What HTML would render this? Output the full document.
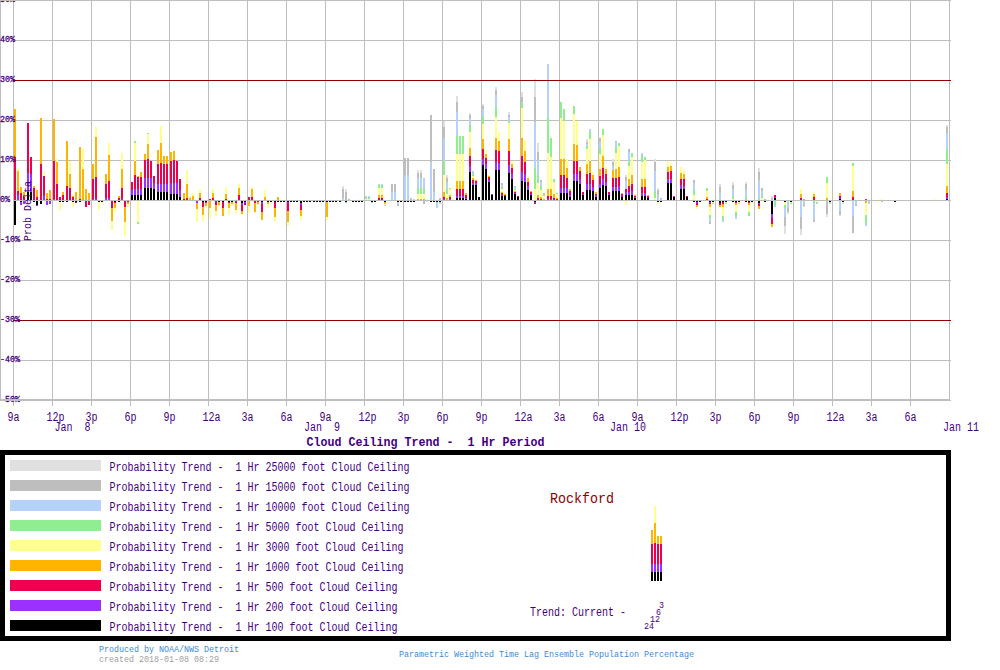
<!DOCTYPE html>
<html><head><meta charset="utf-8"><title>Cloud Ceiling Trend - 1 Hr Period - Rockford</title>
<style>html,body{margin:0;padding:0;background:#fff}svg{display:block}text{font-family:"Liberation Mono","DejaVu Sans Mono",monospace;white-space:pre}</style>
</head><body>
<svg width="1000" height="670" viewBox="0 0 1000 670">
<rect width="1000" height="670" fill="#fff"/>
<g shape-rendering="crispEdges">
<rect x="0" y="0" width="1" height="401" fill="#bebebe"/>
<rect x="13" y="0" width="1" height="406" fill="#bebebe"/>
<rect x="52" y="0" width="1" height="406" fill="#bebebe"/>
<rect x="91" y="0" width="1" height="406" fill="#bebebe"/>
<rect x="130" y="0" width="1" height="406" fill="#bebebe"/>
<rect x="169" y="0" width="1" height="406" fill="#bebebe"/>
<rect x="208" y="0" width="1" height="406" fill="#bebebe"/>
<rect x="247" y="0" width="1" height="406" fill="#bebebe"/>
<rect x="286" y="0" width="1" height="406" fill="#bebebe"/>
<rect x="325" y="0" width="1" height="406" fill="#bebebe"/>
<rect x="364" y="0" width="1" height="406" fill="#bebebe"/>
<rect x="403" y="0" width="1" height="406" fill="#bebebe"/>
<rect x="442" y="0" width="1" height="406" fill="#bebebe"/>
<rect x="481" y="0" width="1" height="406" fill="#bebebe"/>
<rect x="520" y="0" width="1" height="406" fill="#bebebe"/>
<rect x="559" y="0" width="1" height="406" fill="#bebebe"/>
<rect x="598" y="0" width="1" height="406" fill="#bebebe"/>
<rect x="637" y="0" width="1" height="406" fill="#bebebe"/>
<rect x="676" y="0" width="1" height="406" fill="#bebebe"/>
<rect x="715" y="0" width="1" height="406" fill="#bebebe"/>
<rect x="754" y="0" width="1" height="406" fill="#bebebe"/>
<rect x="793" y="0" width="1" height="406" fill="#bebebe"/>
<rect x="832" y="0" width="1" height="406" fill="#bebebe"/>
<rect x="871" y="0" width="1" height="406" fill="#bebebe"/>
<rect x="910" y="0" width="1" height="406" fill="#bebebe"/>
<rect x="949" y="0" width="1" height="401" fill="#bebebe"/>
<rect x="0" y="0" width="951" height="1" fill="#bebebe"/>
<rect x="13" y="40" width="938" height="1" fill="#bebebe"/>
<rect x="13" y="80" width="938" height="1" fill="#8b0000"/>
<rect x="13" y="120" width="938" height="1" fill="#bebebe"/>
<rect x="13" y="160" width="938" height="1" fill="#bebebe"/>
<rect x="13" y="200" width="938" height="1" fill="#bebebe"/>
<rect x="13" y="240" width="938" height="1" fill="#bebebe"/>
<rect x="13" y="280" width="938" height="1" fill="#bebebe"/>
<rect x="13" y="320" width="938" height="1" fill="#8b0000"/>
<rect x="13" y="360" width="938" height="1" fill="#bebebe"/>
<rect x="0" y="400" width="951" height="1" fill="#bebebe"/>
</g>
<g shape-rendering="crispEdges">
<rect x="14" y="157" width="2" height="43" fill="#ee0050"/>
<rect x="14" y="109" width="2" height="48" fill="#ffb400"/>
<rect x="14" y="201" width="2" height="24" fill="#000000"/>
<rect x="17" y="195" width="2" height="5" fill="#9b30ff"/>
<rect x="17" y="191" width="2" height="4" fill="#ee0050"/>
<rect x="17" y="171" width="2" height="20" fill="#ffb400"/>
<rect x="17" y="168" width="2" height="3" fill="#ffff90"/>
<rect x="20" y="193" width="2" height="7" fill="#ee0050"/>
<rect x="20" y="187" width="2" height="6" fill="#ffb400"/>
<rect x="20" y="201" width="2" height="1" fill="#000000"/>
<rect x="20" y="202" width="2" height="3" fill="#9b30ff"/>
<rect x="23" y="197" width="2" height="3" fill="#ee0050"/>
<rect x="23" y="192" width="2" height="5" fill="#ffb400"/>
<rect x="23" y="201" width="2" height="3" fill="#9b30ff"/>
<rect x="27" y="192" width="2" height="8" fill="#000000"/>
<rect x="27" y="173" width="2" height="19" fill="#9b30ff"/>
<rect x="27" y="123" width="2" height="50" fill="#ee0050"/>
<rect x="30" y="192" width="2" height="8" fill="#000000"/>
<rect x="30" y="174" width="2" height="18" fill="#9b30ff"/>
<rect x="30" y="157" width="2" height="17" fill="#ee0050"/>
<rect x="33" y="188" width="2" height="12" fill="#ee0050"/>
<rect x="33" y="186" width="2" height="2" fill="#ffb400"/>
<rect x="33" y="201" width="2" height="1" fill="#000000"/>
<rect x="36" y="197" width="2" height="3" fill="#ee0050"/>
<rect x="36" y="190" width="2" height="7" fill="#ffb400"/>
<rect x="36" y="201" width="2" height="4" fill="#000000"/>
<rect x="36" y="205" width="2" height="1" fill="#9b30ff"/>
<rect x="40" y="164" width="2" height="36" fill="#ee0050"/>
<rect x="40" y="118" width="2" height="46" fill="#ffb400"/>
<rect x="40" y="201" width="2" height="3" fill="#000000"/>
<rect x="43" y="195" width="2" height="5" fill="#9b30ff"/>
<rect x="43" y="176" width="2" height="19" fill="#ee0050"/>
<rect x="43" y="171" width="2" height="5" fill="#ffff90"/>
<rect x="46" y="199" width="2" height="1" fill="#ee0050"/>
<rect x="46" y="193" width="2" height="6" fill="#ffb400"/>
<rect x="46" y="201" width="2" height="4" fill="#9b30ff"/>
<rect x="49" y="199" width="2" height="1" fill="#ee0050"/>
<rect x="49" y="190" width="2" height="9" fill="#ffb400"/>
<rect x="49" y="201" width="2" height="3" fill="#9b30ff"/>
<rect x="53" y="199" width="2" height="1" fill="#9b30ff"/>
<rect x="53" y="161" width="2" height="38" fill="#ee0050"/>
<rect x="53" y="119" width="2" height="42" fill="#ffb400"/>
<rect x="56" y="184" width="2" height="16" fill="#ee0050"/>
<rect x="56" y="162" width="2" height="22" fill="#ffb400"/>
<rect x="56" y="159" width="2" height="3" fill="#ffff90"/>
<rect x="59" y="197" width="2" height="3" fill="#ee0050"/>
<rect x="59" y="201" width="2" height="1" fill="#000000"/>
<rect x="59" y="202" width="2" height="8" fill="#ffff90"/>
<rect x="62" y="195" width="2" height="5" fill="#ee0050"/>
<rect x="62" y="192" width="2" height="3" fill="#ffb400"/>
<rect x="62" y="201" width="2" height="1" fill="#000000"/>
<rect x="66" y="186" width="2" height="14" fill="#ee0050"/>
<rect x="66" y="141" width="2" height="45" fill="#ffb400"/>
<rect x="66" y="201" width="2" height="1" fill="#000000"/>
<rect x="69" y="188" width="2" height="12" fill="#ee0050"/>
<rect x="69" y="174" width="2" height="14" fill="#ffb400"/>
<rect x="69" y="161" width="2" height="13" fill="#ffff90"/>
<rect x="72" y="197" width="2" height="3" fill="#ee0050"/>
<rect x="72" y="196" width="2" height="1" fill="#ffb400"/>
<rect x="72" y="201" width="2" height="1" fill="#000000"/>
<rect x="72" y="202" width="2" height="5" fill="#ffff90"/>
<rect x="75" y="192" width="2" height="8" fill="#ffb400"/>
<rect x="75" y="201" width="2" height="1" fill="#000000"/>
<rect x="75" y="202" width="2" height="1" fill="#ee0050"/>
<rect x="79" y="199" width="2" height="1" fill="#ee0050"/>
<rect x="79" y="147" width="2" height="52" fill="#ffb400"/>
<rect x="79" y="201" width="2" height="1" fill="#000000"/>
<rect x="82" y="169" width="2" height="31" fill="#ffb400"/>
<rect x="82" y="149" width="2" height="20" fill="#ffff90"/>
<rect x="85" y="189" width="2" height="11" fill="#ffb400"/>
<rect x="85" y="201" width="2" height="6" fill="#ee0050"/>
<rect x="88" y="193" width="2" height="7" fill="#ffb400"/>
<rect x="88" y="201" width="2" height="4" fill="#ee0050"/>
<rect x="92" y="199" width="2" height="1" fill="#9b30ff"/>
<rect x="92" y="179" width="2" height="20" fill="#ee0050"/>
<rect x="92" y="164" width="2" height="15" fill="#ffb400"/>
<rect x="95" y="199" width="2" height="1" fill="#9b30ff"/>
<rect x="95" y="177" width="2" height="22" fill="#ee0050"/>
<rect x="95" y="137" width="2" height="40" fill="#ffb400"/>
<rect x="95" y="127" width="2" height="10" fill="#ffff90"/>
<rect x="98" y="201" width="2" height="1" fill="#000000"/>
<rect x="98" y="202" width="2" height="8" fill="#ffff90"/>
<rect x="101" y="201" width="2" height="1" fill="#000000"/>
<rect x="101" y="202" width="2" height="1" fill="#ffff90"/>
<rect x="105" y="198" width="2" height="2" fill="#9b30ff"/>
<rect x="105" y="184" width="2" height="14" fill="#ee0050"/>
<rect x="105" y="174" width="2" height="10" fill="#ffb400"/>
<rect x="108" y="198" width="2" height="2" fill="#9b30ff"/>
<rect x="108" y="181" width="2" height="17" fill="#ee0050"/>
<rect x="108" y="155" width="2" height="26" fill="#ffb400"/>
<rect x="108" y="143" width="2" height="12" fill="#ffff90"/>
<rect x="111" y="201" width="2" height="7" fill="#ee0050"/>
<rect x="111" y="208" width="2" height="13" fill="#ffb400"/>
<rect x="111" y="221" width="2" height="9" fill="#ffff90"/>
<rect x="114" y="201" width="2" height="1" fill="#000000"/>
<rect x="114" y="202" width="2" height="1" fill="#ee0050"/>
<rect x="114" y="203" width="2" height="5" fill="#ffb400"/>
<rect x="114" y="208" width="2" height="4" fill="#ffff90"/>
<rect x="118" y="198" width="2" height="2" fill="#ee0050"/>
<rect x="118" y="196" width="2" height="2" fill="#ffb400"/>
<rect x="118" y="201" width="2" height="1" fill="#000000"/>
<rect x="121" y="199" width="2" height="1" fill="#9b30ff"/>
<rect x="121" y="188" width="2" height="11" fill="#ee0050"/>
<rect x="121" y="169" width="2" height="19" fill="#ffb400"/>
<rect x="121" y="153" width="2" height="16" fill="#ffff90"/>
<rect x="124" y="201" width="2" height="6" fill="#ee0050"/>
<rect x="124" y="207" width="2" height="15" fill="#ffb400"/>
<rect x="124" y="222" width="2" height="14" fill="#ffff90"/>
<rect x="127" y="201" width="2" height="1" fill="#ee0050"/>
<rect x="127" y="202" width="2" height="2" fill="#ffb400"/>
<rect x="127" y="204" width="2" height="3" fill="#ffff90"/>
<rect x="131" y="195" width="2" height="5" fill="#000000"/>
<rect x="131" y="190" width="2" height="5" fill="#9b30ff"/>
<rect x="131" y="182" width="2" height="8" fill="#ee0050"/>
<rect x="134" y="195" width="2" height="5" fill="#000000"/>
<rect x="134" y="189" width="2" height="6" fill="#9b30ff"/>
<rect x="134" y="175" width="2" height="14" fill="#ee0050"/>
<rect x="134" y="161" width="2" height="14" fill="#ffb400"/>
<rect x="134" y="143" width="2" height="18" fill="#ffff90"/>
<rect x="134" y="141" width="2" height="2" fill="#90ee90"/>
<rect x="137" y="195" width="2" height="5" fill="#000000"/>
<rect x="137" y="189" width="2" height="6" fill="#9b30ff"/>
<rect x="137" y="177" width="2" height="12" fill="#ee0050"/>
<rect x="137" y="176" width="2" height="1" fill="#ffb400"/>
<rect x="137" y="201" width="2" height="21" fill="#ffff90"/>
<rect x="137" y="222" width="2" height="2" fill="#90ee90"/>
<rect x="140" y="195" width="2" height="5" fill="#000000"/>
<rect x="140" y="189" width="2" height="6" fill="#9b30ff"/>
<rect x="140" y="177" width="2" height="12" fill="#ee0050"/>
<rect x="140" y="172" width="2" height="5" fill="#ffb400"/>
<rect x="144" y="188" width="2" height="12" fill="#000000"/>
<rect x="144" y="178" width="2" height="10" fill="#9b30ff"/>
<rect x="144" y="160" width="2" height="18" fill="#ee0050"/>
<rect x="144" y="154" width="2" height="6" fill="#ffb400"/>
<rect x="147" y="188" width="2" height="12" fill="#000000"/>
<rect x="147" y="178" width="2" height="10" fill="#9b30ff"/>
<rect x="147" y="159" width="2" height="19" fill="#ee0050"/>
<rect x="147" y="144" width="2" height="15" fill="#ffb400"/>
<rect x="147" y="134" width="2" height="10" fill="#ffff90"/>
<rect x="147" y="133" width="2" height="1" fill="#90ee90"/>
<rect x="150" y="188" width="2" height="12" fill="#000000"/>
<rect x="150" y="178" width="2" height="10" fill="#9b30ff"/>
<rect x="150" y="161" width="2" height="17" fill="#ee0050"/>
<rect x="153" y="189" width="2" height="11" fill="#000000"/>
<rect x="153" y="183" width="2" height="6" fill="#9b30ff"/>
<rect x="153" y="176" width="2" height="7" fill="#ee0050"/>
<rect x="157" y="192" width="2" height="8" fill="#000000"/>
<rect x="157" y="184" width="2" height="8" fill="#9b30ff"/>
<rect x="157" y="164" width="2" height="20" fill="#ee0050"/>
<rect x="157" y="150" width="2" height="14" fill="#ffb400"/>
<rect x="160" y="192" width="2" height="8" fill="#000000"/>
<rect x="160" y="184" width="2" height="8" fill="#9b30ff"/>
<rect x="160" y="163" width="2" height="21" fill="#ee0050"/>
<rect x="160" y="143" width="2" height="20" fill="#ffb400"/>
<rect x="160" y="126" width="2" height="17" fill="#ffff90"/>
<rect x="163" y="192" width="2" height="8" fill="#000000"/>
<rect x="163" y="184" width="2" height="8" fill="#9b30ff"/>
<rect x="163" y="164" width="2" height="20" fill="#ee0050"/>
<rect x="163" y="156" width="2" height="8" fill="#ffb400"/>
<rect x="166" y="192" width="2" height="8" fill="#000000"/>
<rect x="166" y="184" width="2" height="8" fill="#9b30ff"/>
<rect x="166" y="164" width="2" height="20" fill="#ee0050"/>
<rect x="166" y="156" width="2" height="8" fill="#ffb400"/>
<rect x="170" y="194" width="2" height="6" fill="#000000"/>
<rect x="170" y="183" width="2" height="11" fill="#9b30ff"/>
<rect x="170" y="161" width="2" height="22" fill="#ee0050"/>
<rect x="170" y="152" width="2" height="9" fill="#ffb400"/>
<rect x="173" y="194" width="2" height="6" fill="#000000"/>
<rect x="173" y="183" width="2" height="11" fill="#9b30ff"/>
<rect x="173" y="160" width="2" height="23" fill="#ee0050"/>
<rect x="173" y="151" width="2" height="9" fill="#ffb400"/>
<rect x="176" y="194" width="2" height="6" fill="#000000"/>
<rect x="176" y="183" width="2" height="11" fill="#9b30ff"/>
<rect x="176" y="161" width="2" height="22" fill="#ee0050"/>
<rect x="179" y="197" width="2" height="3" fill="#000000"/>
<rect x="179" y="190" width="2" height="7" fill="#9b30ff"/>
<rect x="179" y="179" width="2" height="11" fill="#ee0050"/>
<rect x="183" y="199" width="2" height="1" fill="#ee0050"/>
<rect x="183" y="193" width="2" height="6" fill="#ffb400"/>
<rect x="183" y="201" width="2" height="1" fill="#ffff90"/>
<rect x="186" y="198" width="2" height="2" fill="#ee0050"/>
<rect x="186" y="184" width="2" height="14" fill="#ffb400"/>
<rect x="186" y="170" width="2" height="14" fill="#ffff90"/>
<rect x="189" y="198" width="2" height="2" fill="#ffb400"/>
<rect x="189" y="196" width="2" height="2" fill="#ffff90"/>
<rect x="192" y="196" width="2" height="4" fill="#ffb400"/>
<rect x="192" y="193" width="2" height="3" fill="#ffff90"/>
<rect x="196" y="201" width="2" height="2" fill="#9b30ff"/>
<rect x="196" y="203" width="2" height="6" fill="#ffb400"/>
<rect x="196" y="209" width="2" height="13" fill="#ffff90"/>
<rect x="199" y="198" width="2" height="2" fill="#ee0050"/>
<rect x="199" y="193" width="2" height="5" fill="#ffb400"/>
<rect x="199" y="189" width="2" height="4" fill="#ffff90"/>
<rect x="202" y="201" width="2" height="1" fill="#000000"/>
<rect x="202" y="202" width="2" height="5" fill="#ee0050"/>
<rect x="202" y="207" width="2" height="8" fill="#ffb400"/>
<rect x="202" y="215" width="2" height="6" fill="#ffff90"/>
<rect x="205" y="201" width="2" height="1" fill="#000000"/>
<rect x="205" y="202" width="2" height="1" fill="#ee0050"/>
<rect x="205" y="203" width="2" height="3" fill="#ffb400"/>
<rect x="205" y="206" width="2" height="2" fill="#ffff90"/>
<rect x="209" y="199" width="2" height="1" fill="#ee0050"/>
<rect x="209" y="201" width="2" height="7" fill="#ffb400"/>
<rect x="209" y="208" width="2" height="10" fill="#ffff90"/>
<rect x="212" y="198" width="2" height="2" fill="#ee0050"/>
<rect x="212" y="193" width="2" height="5" fill="#ffb400"/>
<rect x="212" y="189" width="2" height="4" fill="#ffff90"/>
<rect x="215" y="201" width="2" height="4" fill="#ee0050"/>
<rect x="215" y="205" width="2" height="6" fill="#ffb400"/>
<rect x="215" y="211" width="2" height="5" fill="#ffff90"/>
<rect x="218" y="201" width="2" height="1" fill="#000000"/>
<rect x="218" y="202" width="2" height="3" fill="#ffb400"/>
<rect x="218" y="205" width="2" height="1" fill="#ffff90"/>
<rect x="222" y="201" width="2" height="1" fill="#000000"/>
<rect x="222" y="202" width="2" height="6" fill="#ee0050"/>
<rect x="222" y="208" width="2" height="8" fill="#ffb400"/>
<rect x="225" y="199" width="2" height="1" fill="#ee0050"/>
<rect x="225" y="194" width="2" height="5" fill="#ffb400"/>
<rect x="225" y="187" width="2" height="7" fill="#ffff90"/>
<rect x="228" y="201" width="2" height="1" fill="#000000"/>
<rect x="228" y="202" width="2" height="1" fill="#ee0050"/>
<rect x="228" y="203" width="2" height="5" fill="#ffb400"/>
<rect x="228" y="208" width="2" height="7" fill="#ffff90"/>
<rect x="231" y="201" width="2" height="1" fill="#000000"/>
<rect x="231" y="202" width="2" height="2" fill="#ffb400"/>
<rect x="231" y="204" width="2" height="2" fill="#ffff90"/>
<rect x="235" y="201" width="2" height="2" fill="#ee0050"/>
<rect x="235" y="203" width="2" height="7" fill="#ffb400"/>
<rect x="235" y="210" width="2" height="3" fill="#ffff90"/>
<rect x="238" y="195" width="2" height="5" fill="#ee0050"/>
<rect x="238" y="188" width="2" height="7" fill="#ffb400"/>
<rect x="238" y="184" width="2" height="4" fill="#ffff90"/>
<rect x="241" y="201" width="2" height="2" fill="#000000"/>
<rect x="241" y="203" width="2" height="2" fill="#9b30ff"/>
<rect x="241" y="205" width="2" height="6" fill="#ee0050"/>
<rect x="241" y="211" width="2" height="3" fill="#ffb400"/>
<rect x="241" y="214" width="2" height="1" fill="#ffff90"/>
<rect x="244" y="201" width="2" height="1" fill="#000000"/>
<rect x="244" y="202" width="2" height="1" fill="#9b30ff"/>
<rect x="244" y="203" width="2" height="2" fill="#ee0050"/>
<rect x="244" y="205" width="2" height="1" fill="#ffff90"/>
<rect x="248" y="197" width="2" height="3" fill="#ee0050"/>
<rect x="248" y="201" width="2" height="5" fill="#ffb400"/>
<rect x="248" y="206" width="2" height="7" fill="#ffff90"/>
<rect x="251" y="197" width="2" height="3" fill="#ee0050"/>
<rect x="251" y="189" width="2" height="8" fill="#ffb400"/>
<rect x="251" y="186" width="2" height="3" fill="#ffff90"/>
<rect x="254" y="201" width="2" height="2" fill="#ee0050"/>
<rect x="254" y="203" width="2" height="9" fill="#ffb400"/>
<rect x="254" y="212" width="2" height="1" fill="#ffff90"/>
<rect x="257" y="201" width="2" height="1" fill="#ee0050"/>
<rect x="257" y="202" width="2" height="2" fill="#ffb400"/>
<rect x="257" y="204" width="2" height="1" fill="#ffff90"/>
<rect x="261" y="201" width="2" height="1" fill="#000000"/>
<rect x="261" y="202" width="2" height="2" fill="#9b30ff"/>
<rect x="261" y="204" width="2" height="8" fill="#ee0050"/>
<rect x="261" y="212" width="2" height="8" fill="#ffb400"/>
<rect x="264" y="197" width="2" height="3" fill="#ffb400"/>
<rect x="264" y="190" width="2" height="7" fill="#ffff90"/>
<rect x="267" y="201" width="2" height="1" fill="#000000"/>
<rect x="267" y="202" width="2" height="2" fill="#ffb400"/>
<rect x="267" y="204" width="2" height="4" fill="#ffff90"/>
<rect x="270" y="201" width="2" height="1" fill="#000000"/>
<rect x="274" y="201" width="2" height="1" fill="#000000"/>
<rect x="274" y="202" width="2" height="6" fill="#ee0050"/>
<rect x="274" y="208" width="2" height="9" fill="#ffb400"/>
<rect x="274" y="217" width="2" height="5" fill="#ffff90"/>
<rect x="277" y="197" width="2" height="3" fill="#ffb400"/>
<rect x="277" y="201" width="2" height="1" fill="#000000"/>
<rect x="280" y="201" width="2" height="1" fill="#000000"/>
<rect x="280" y="202" width="2" height="1" fill="#ffff90"/>
<rect x="283" y="201" width="2" height="1" fill="#000000"/>
<rect x="287" y="201" width="2" height="1" fill="#000000"/>
<rect x="287" y="202" width="2" height="1" fill="#9b30ff"/>
<rect x="287" y="203" width="2" height="8" fill="#ee0050"/>
<rect x="287" y="211" width="2" height="11" fill="#ffb400"/>
<rect x="287" y="222" width="2" height="4" fill="#ffff90"/>
<rect x="290" y="201" width="2" height="1" fill="#000000"/>
<rect x="293" y="201" width="2" height="1" fill="#000000"/>
<rect x="296" y="201" width="2" height="1" fill="#000000"/>
<rect x="300" y="201" width="2" height="2" fill="#000000"/>
<rect x="300" y="203" width="2" height="2" fill="#9b30ff"/>
<rect x="300" y="205" width="2" height="5" fill="#ee0050"/>
<rect x="300" y="210" width="2" height="6" fill="#ffb400"/>
<rect x="300" y="216" width="2" height="4" fill="#ffff90"/>
<rect x="303" y="201" width="2" height="1" fill="#000000"/>
<rect x="306" y="201" width="2" height="1" fill="#000000"/>
<rect x="309" y="201" width="2" height="1" fill="#000000"/>
<rect x="313" y="201" width="2" height="1" fill="#000000"/>
<rect x="316" y="201" width="2" height="1" fill="#000000"/>
<rect x="319" y="201" width="2" height="1" fill="#000000"/>
<rect x="322" y="201" width="2" height="1" fill="#000000"/>
<rect x="326" y="201" width="2" height="1" fill="#000000"/>
<rect x="326" y="202" width="2" height="15" fill="#ffb400"/>
<rect x="326" y="217" width="2" height="3" fill="#ffff90"/>
<rect x="329" y="201" width="2" height="1" fill="#000000"/>
<rect x="332" y="201" width="2" height="1" fill="#000000"/>
<rect x="335" y="201" width="2" height="1" fill="#000000"/>
<rect x="339" y="201" width="2" height="1" fill="#000000"/>
<rect x="342" y="198" width="2" height="2" fill="#b4d2fa"/>
<rect x="342" y="189" width="2" height="9" fill="#bebebe"/>
<rect x="342" y="186" width="2" height="3" fill="#e0e0e0"/>
<rect x="345" y="192" width="2" height="8" fill="#bebebe"/>
<rect x="345" y="189" width="2" height="3" fill="#e0e0e0"/>
<rect x="345" y="201" width="2" height="1" fill="#000000"/>
<rect x="345" y="202" width="2" height="1" fill="#90ee90"/>
<rect x="348" y="199" width="2" height="1" fill="#bebebe"/>
<rect x="352" y="201" width="2" height="1" fill="#000000"/>
<rect x="355" y="201" width="2" height="1" fill="#000000"/>
<rect x="358" y="201" width="2" height="1" fill="#000000"/>
<rect x="361" y="201" width="2" height="1" fill="#000000"/>
<rect x="365" y="199" width="2" height="1" fill="#ffff90"/>
<rect x="365" y="197" width="2" height="2" fill="#90ee90"/>
<rect x="365" y="196" width="2" height="1" fill="#b4d2fa"/>
<rect x="368" y="199" width="2" height="1" fill="#ffff90"/>
<rect x="368" y="197" width="2" height="2" fill="#90ee90"/>
<rect x="368" y="196" width="2" height="1" fill="#b4d2fa"/>
<rect x="371" y="201" width="2" height="1" fill="#000000"/>
<rect x="371" y="202" width="2" height="1" fill="#90ee90"/>
<rect x="374" y="201" width="2" height="1" fill="#000000"/>
<rect x="378" y="198" width="2" height="2" fill="#ee0050"/>
<rect x="378" y="195" width="2" height="3" fill="#ffb400"/>
<rect x="378" y="188" width="2" height="7" fill="#ffff90"/>
<rect x="378" y="185" width="2" height="3" fill="#90ee90"/>
<rect x="378" y="184" width="2" height="1" fill="#b4d2fa"/>
<rect x="381" y="198" width="2" height="2" fill="#ee0050"/>
<rect x="381" y="195" width="2" height="3" fill="#ffb400"/>
<rect x="381" y="188" width="2" height="7" fill="#ffff90"/>
<rect x="381" y="185" width="2" height="3" fill="#90ee90"/>
<rect x="381" y="184" width="2" height="1" fill="#b4d2fa"/>
<rect x="384" y="201" width="2" height="1" fill="#000000"/>
<rect x="384" y="202" width="2" height="2" fill="#ffb400"/>
<rect x="384" y="204" width="2" height="1" fill="#ffff90"/>
<rect x="384" y="205" width="2" height="1" fill="#b4d2fa"/>
<rect x="391" y="192" width="2" height="8" fill="#b4d2fa"/>
<rect x="391" y="184" width="2" height="8" fill="#bebebe"/>
<rect x="394" y="192" width="2" height="8" fill="#b4d2fa"/>
<rect x="394" y="184" width="2" height="8" fill="#bebebe"/>
<rect x="397" y="201" width="2" height="1" fill="#000000"/>
<rect x="397" y="202" width="2" height="2" fill="#b4d2fa"/>
<rect x="397" y="204" width="2" height="2" fill="#bebebe"/>
<rect x="400" y="201" width="2" height="1" fill="#000000"/>
<rect x="404" y="175" width="2" height="25" fill="#b4d2fa"/>
<rect x="404" y="158" width="2" height="17" fill="#bebebe"/>
<rect x="404" y="201" width="2" height="1" fill="#000000"/>
<rect x="407" y="175" width="2" height="25" fill="#b4d2fa"/>
<rect x="407" y="158" width="2" height="17" fill="#bebebe"/>
<rect x="407" y="201" width="2" height="1" fill="#000000"/>
<rect x="410" y="198" width="2" height="2" fill="#bebebe"/>
<rect x="410" y="201" width="2" height="1" fill="#000000"/>
<rect x="413" y="199" width="2" height="1" fill="#b4d2fa"/>
<rect x="413" y="201" width="2" height="1" fill="#000000"/>
<rect x="417" y="199" width="2" height="1" fill="#ffb400"/>
<rect x="417" y="194" width="2" height="5" fill="#ffff90"/>
<rect x="417" y="188" width="2" height="6" fill="#90ee90"/>
<rect x="417" y="178" width="2" height="10" fill="#b4d2fa"/>
<rect x="417" y="173" width="2" height="5" fill="#bebebe"/>
<rect x="417" y="170" width="2" height="3" fill="#e0e0e0"/>
<rect x="420" y="199" width="2" height="1" fill="#ffb400"/>
<rect x="420" y="194" width="2" height="5" fill="#ffff90"/>
<rect x="420" y="188" width="2" height="6" fill="#90ee90"/>
<rect x="420" y="178" width="2" height="10" fill="#b4d2fa"/>
<rect x="420" y="173" width="2" height="5" fill="#bebebe"/>
<rect x="420" y="170" width="2" height="3" fill="#e0e0e0"/>
<rect x="423" y="199" width="2" height="1" fill="#ffb400"/>
<rect x="423" y="194" width="2" height="5" fill="#ffff90"/>
<rect x="423" y="188" width="2" height="6" fill="#90ee90"/>
<rect x="423" y="178" width="2" height="10" fill="#b4d2fa"/>
<rect x="423" y="201" width="2" height="3" fill="#bebebe"/>
<rect x="426" y="199" width="2" height="1" fill="#ffff90"/>
<rect x="426" y="201" width="2" height="1" fill="#e0e0e0"/>
<rect x="430" y="162" width="2" height="38" fill="#b4d2fa"/>
<rect x="430" y="115" width="2" height="47" fill="#bebebe"/>
<rect x="430" y="201" width="2" height="1" fill="#000000"/>
<rect x="433" y="192" width="2" height="8" fill="#b4d2fa"/>
<rect x="433" y="169" width="2" height="23" fill="#bebebe"/>
<rect x="433" y="201" width="2" height="1" fill="#000000"/>
<rect x="436" y="201" width="2" height="1" fill="#000000"/>
<rect x="436" y="202" width="2" height="6" fill="#b4d2fa"/>
<rect x="439" y="198" width="2" height="2" fill="#bebebe"/>
<rect x="439" y="201" width="2" height="1" fill="#000000"/>
<rect x="439" y="202" width="2" height="2" fill="#b4d2fa"/>
<rect x="443" y="199" width="2" height="1" fill="#9b30ff"/>
<rect x="443" y="197" width="2" height="2" fill="#ee0050"/>
<rect x="443" y="192" width="2" height="5" fill="#ffb400"/>
<rect x="443" y="175" width="2" height="17" fill="#ffff90"/>
<rect x="443" y="161" width="2" height="14" fill="#90ee90"/>
<rect x="443" y="138" width="2" height="23" fill="#b4d2fa"/>
<rect x="443" y="127" width="2" height="11" fill="#bebebe"/>
<rect x="443" y="121" width="2" height="6" fill="#e0e0e0"/>
<rect x="446" y="198" width="2" height="2" fill="#ffb400"/>
<rect x="446" y="194" width="2" height="4" fill="#ffff90"/>
<rect x="446" y="190" width="2" height="4" fill="#90ee90"/>
<rect x="446" y="182" width="2" height="8" fill="#b4d2fa"/>
<rect x="446" y="178" width="2" height="4" fill="#bebebe"/>
<rect x="446" y="175" width="2" height="3" fill="#e0e0e0"/>
<rect x="449" y="199" width="2" height="1" fill="#9b30ff"/>
<rect x="449" y="197" width="2" height="2" fill="#ee0050"/>
<rect x="449" y="195" width="2" height="2" fill="#ffb400"/>
<rect x="449" y="189" width="2" height="6" fill="#ffff90"/>
<rect x="449" y="188" width="2" height="1" fill="#90ee90"/>
<rect x="452" y="199" width="2" height="1" fill="#ffff90"/>
<rect x="456" y="198" width="2" height="2" fill="#000000"/>
<rect x="456" y="196" width="2" height="2" fill="#9b30ff"/>
<rect x="456" y="189" width="2" height="7" fill="#ee0050"/>
<rect x="456" y="181" width="2" height="8" fill="#ffb400"/>
<rect x="456" y="154" width="2" height="27" fill="#ffff90"/>
<rect x="456" y="136" width="2" height="18" fill="#90ee90"/>
<rect x="456" y="112" width="2" height="24" fill="#b4d2fa"/>
<rect x="456" y="102" width="2" height="10" fill="#bebebe"/>
<rect x="456" y="96" width="2" height="6" fill="#e0e0e0"/>
<rect x="459" y="198" width="2" height="2" fill="#000000"/>
<rect x="459" y="196" width="2" height="2" fill="#9b30ff"/>
<rect x="459" y="189" width="2" height="7" fill="#ee0050"/>
<rect x="459" y="181" width="2" height="8" fill="#ffb400"/>
<rect x="459" y="154" width="2" height="27" fill="#ffff90"/>
<rect x="459" y="136" width="2" height="18" fill="#90ee90"/>
<rect x="462" y="198" width="2" height="2" fill="#000000"/>
<rect x="462" y="196" width="2" height="2" fill="#9b30ff"/>
<rect x="462" y="189" width="2" height="7" fill="#ee0050"/>
<rect x="462" y="181" width="2" height="8" fill="#ffb400"/>
<rect x="462" y="154" width="2" height="27" fill="#ffff90"/>
<rect x="462" y="136" width="2" height="18" fill="#90ee90"/>
<rect x="465" y="199" width="2" height="1" fill="#000000"/>
<rect x="465" y="198" width="2" height="1" fill="#9b30ff"/>
<rect x="465" y="195" width="2" height="3" fill="#ee0050"/>
<rect x="465" y="193" width="2" height="2" fill="#ffb400"/>
<rect x="465" y="190" width="2" height="3" fill="#ffff90"/>
<rect x="469" y="172" width="2" height="28" fill="#000000"/>
<rect x="469" y="166" width="2" height="6" fill="#9b30ff"/>
<rect x="469" y="156" width="2" height="10" fill="#ee0050"/>
<rect x="469" y="148" width="2" height="8" fill="#ffb400"/>
<rect x="469" y="132" width="2" height="16" fill="#ffff90"/>
<rect x="469" y="125" width="2" height="7" fill="#90ee90"/>
<rect x="469" y="118" width="2" height="7" fill="#b4d2fa"/>
<rect x="469" y="115" width="2" height="3" fill="#bebebe"/>
<rect x="469" y="113" width="2" height="2" fill="#e0e0e0"/>
<rect x="472" y="185" width="2" height="15" fill="#000000"/>
<rect x="472" y="183" width="2" height="2" fill="#9b30ff"/>
<rect x="472" y="180" width="2" height="3" fill="#ee0050"/>
<rect x="472" y="178" width="2" height="2" fill="#ffb400"/>
<rect x="472" y="176" width="2" height="2" fill="#ffff90"/>
<rect x="472" y="174" width="2" height="2" fill="#90ee90"/>
<rect x="472" y="171" width="2" height="3" fill="#b4d2fa"/>
<rect x="475" y="185" width="2" height="15" fill="#000000"/>
<rect x="475" y="183" width="2" height="2" fill="#9b30ff"/>
<rect x="475" y="181" width="2" height="2" fill="#ee0050"/>
<rect x="475" y="180" width="2" height="1" fill="#ffb400"/>
<rect x="475" y="179" width="2" height="1" fill="#ffff90"/>
<rect x="478" y="197" width="2" height="3" fill="#000000"/>
<rect x="482" y="165" width="2" height="35" fill="#000000"/>
<rect x="482" y="159" width="2" height="6" fill="#9b30ff"/>
<rect x="482" y="149" width="2" height="10" fill="#ee0050"/>
<rect x="482" y="139" width="2" height="10" fill="#ffb400"/>
<rect x="482" y="124" width="2" height="15" fill="#ffff90"/>
<rect x="482" y="116" width="2" height="8" fill="#90ee90"/>
<rect x="482" y="109" width="2" height="7" fill="#b4d2fa"/>
<rect x="482" y="106" width="2" height="3" fill="#bebebe"/>
<rect x="482" y="104" width="2" height="2" fill="#e0e0e0"/>
<rect x="485" y="169" width="2" height="31" fill="#000000"/>
<rect x="485" y="164" width="2" height="5" fill="#9b30ff"/>
<rect x="485" y="158" width="2" height="6" fill="#ee0050"/>
<rect x="485" y="154" width="2" height="4" fill="#ffb400"/>
<rect x="485" y="150" width="2" height="4" fill="#ffff90"/>
<rect x="488" y="182" width="2" height="18" fill="#000000"/>
<rect x="488" y="180" width="2" height="2" fill="#9b30ff"/>
<rect x="488" y="177" width="2" height="3" fill="#ee0050"/>
<rect x="488" y="176" width="2" height="1" fill="#ffb400"/>
<rect x="488" y="175" width="2" height="1" fill="#ffff90"/>
<rect x="491" y="195" width="2" height="5" fill="#000000"/>
<rect x="491" y="194" width="2" height="1" fill="#9b30ff"/>
<rect x="495" y="170" width="2" height="30" fill="#000000"/>
<rect x="495" y="162" width="2" height="8" fill="#9b30ff"/>
<rect x="495" y="150" width="2" height="12" fill="#ee0050"/>
<rect x="495" y="138" width="2" height="12" fill="#ffb400"/>
<rect x="495" y="117" width="2" height="21" fill="#ffff90"/>
<rect x="495" y="107" width="2" height="10" fill="#90ee90"/>
<rect x="495" y="95" width="2" height="12" fill="#b4d2fa"/>
<rect x="495" y="90" width="2" height="5" fill="#bebebe"/>
<rect x="495" y="87" width="2" height="3" fill="#e0e0e0"/>
<rect x="498" y="170" width="2" height="30" fill="#000000"/>
<rect x="498" y="163" width="2" height="7" fill="#9b30ff"/>
<rect x="498" y="151" width="2" height="12" fill="#ee0050"/>
<rect x="498" y="141" width="2" height="10" fill="#ffb400"/>
<rect x="498" y="132" width="2" height="9" fill="#ffff90"/>
<rect x="501" y="196" width="2" height="4" fill="#000000"/>
<rect x="501" y="195" width="2" height="1" fill="#9b30ff"/>
<rect x="501" y="193" width="2" height="2" fill="#ee0050"/>
<rect x="501" y="192" width="2" height="1" fill="#ffb400"/>
<rect x="501" y="189" width="2" height="3" fill="#ffff90"/>
<rect x="501" y="187" width="2" height="2" fill="#90ee90"/>
<rect x="501" y="185" width="2" height="2" fill="#b4d2fa"/>
<rect x="501" y="183" width="2" height="2" fill="#bebebe"/>
<rect x="504" y="196" width="2" height="4" fill="#000000"/>
<rect x="504" y="195" width="2" height="1" fill="#9b30ff"/>
<rect x="504" y="194" width="2" height="1" fill="#ffb400"/>
<rect x="508" y="173" width="2" height="27" fill="#000000"/>
<rect x="508" y="165" width="2" height="8" fill="#9b30ff"/>
<rect x="508" y="151" width="2" height="14" fill="#ee0050"/>
<rect x="508" y="139" width="2" height="12" fill="#ffb400"/>
<rect x="508" y="123" width="2" height="16" fill="#ffff90"/>
<rect x="508" y="121" width="2" height="2" fill="#90ee90"/>
<rect x="508" y="117" width="2" height="4" fill="#b4d2fa"/>
<rect x="508" y="115" width="2" height="2" fill="#bebebe"/>
<rect x="508" y="112" width="2" height="3" fill="#e0e0e0"/>
<rect x="511" y="179" width="2" height="21" fill="#000000"/>
<rect x="511" y="174" width="2" height="5" fill="#9b30ff"/>
<rect x="511" y="168" width="2" height="6" fill="#ee0050"/>
<rect x="511" y="164" width="2" height="4" fill="#ffb400"/>
<rect x="511" y="161" width="2" height="3" fill="#ffff90"/>
<rect x="514" y="194" width="2" height="6" fill="#000000"/>
<rect x="514" y="193" width="2" height="1" fill="#9b30ff"/>
<rect x="514" y="192" width="2" height="1" fill="#ee0050"/>
<rect x="514" y="191" width="2" height="1" fill="#ffb400"/>
<rect x="514" y="190" width="2" height="1" fill="#ffff90"/>
<rect x="514" y="188" width="2" height="2" fill="#90ee90"/>
<rect x="514" y="187" width="2" height="1" fill="#b4d2fa"/>
<rect x="514" y="186" width="2" height="1" fill="#bebebe"/>
<rect x="517" y="197" width="2" height="3" fill="#000000"/>
<rect x="517" y="196" width="2" height="1" fill="#ee0050"/>
<rect x="521" y="181" width="2" height="19" fill="#000000"/>
<rect x="521" y="172" width="2" height="9" fill="#9b30ff"/>
<rect x="521" y="156" width="2" height="16" fill="#ee0050"/>
<rect x="521" y="138" width="2" height="18" fill="#ffb400"/>
<rect x="521" y="108" width="2" height="30" fill="#ffff90"/>
<rect x="521" y="103" width="2" height="5" fill="#90ee90"/>
<rect x="521" y="102" width="2" height="1" fill="#b4d2fa"/>
<rect x="521" y="97" width="2" height="5" fill="#bebebe"/>
<rect x="521" y="92" width="2" height="5" fill="#e0e0e0"/>
<rect x="524" y="182" width="2" height="18" fill="#000000"/>
<rect x="524" y="174" width="2" height="8" fill="#9b30ff"/>
<rect x="524" y="162" width="2" height="12" fill="#ee0050"/>
<rect x="524" y="151" width="2" height="11" fill="#ffb400"/>
<rect x="524" y="140" width="2" height="11" fill="#ffff90"/>
<rect x="527" y="190" width="2" height="10" fill="#000000"/>
<rect x="527" y="186" width="2" height="4" fill="#9b30ff"/>
<rect x="527" y="182" width="2" height="4" fill="#ee0050"/>
<rect x="527" y="178" width="2" height="4" fill="#ffb400"/>
<rect x="527" y="176" width="2" height="2" fill="#ffff90"/>
<rect x="530" y="195" width="2" height="5" fill="#000000"/>
<rect x="530" y="194" width="2" height="1" fill="#9b30ff"/>
<rect x="530" y="192" width="2" height="2" fill="#ee0050"/>
<rect x="530" y="191" width="2" height="1" fill="#ffb400"/>
<rect x="534" y="189" width="2" height="11" fill="#ffff90"/>
<rect x="534" y="168" width="2" height="21" fill="#90ee90"/>
<rect x="534" y="122" width="2" height="46" fill="#b4d2fa"/>
<rect x="534" y="97" width="2" height="25" fill="#bebebe"/>
<rect x="534" y="79" width="2" height="18" fill="#e0e0e0"/>
<rect x="534" y="201" width="2" height="1" fill="#000000"/>
<rect x="534" y="202" width="2" height="1" fill="#9b30ff"/>
<rect x="534" y="203" width="2" height="1" fill="#ee0050"/>
<rect x="537" y="198" width="2" height="2" fill="#ee0050"/>
<rect x="537" y="195" width="2" height="3" fill="#ffb400"/>
<rect x="537" y="183" width="2" height="12" fill="#ffff90"/>
<rect x="537" y="175" width="2" height="8" fill="#90ee90"/>
<rect x="537" y="160" width="2" height="15" fill="#b4d2fa"/>
<rect x="537" y="152" width="2" height="8" fill="#bebebe"/>
<rect x="537" y="143" width="2" height="9" fill="#e0e0e0"/>
<rect x="540" y="199" width="2" height="1" fill="#ee0050"/>
<rect x="540" y="197" width="2" height="2" fill="#ffb400"/>
<rect x="540" y="190" width="2" height="7" fill="#ffff90"/>
<rect x="540" y="186" width="2" height="4" fill="#90ee90"/>
<rect x="540" y="182" width="2" height="4" fill="#b4d2fa"/>
<rect x="540" y="180" width="2" height="2" fill="#bebebe"/>
<rect x="543" y="199" width="2" height="1" fill="#ffb400"/>
<rect x="543" y="196" width="2" height="3" fill="#ffff90"/>
<rect x="543" y="194" width="2" height="2" fill="#90ee90"/>
<rect x="543" y="193" width="2" height="1" fill="#bebebe"/>
<rect x="547" y="199" width="2" height="1" fill="#9b30ff"/>
<rect x="547" y="196" width="2" height="3" fill="#ee0050"/>
<rect x="547" y="189" width="2" height="7" fill="#ffb400"/>
<rect x="547" y="153" width="2" height="36" fill="#ffff90"/>
<rect x="547" y="118" width="2" height="35" fill="#90ee90"/>
<rect x="547" y="64" width="2" height="54" fill="#b4d2fa"/>
<rect x="550" y="199" width="2" height="1" fill="#9b30ff"/>
<rect x="550" y="196" width="2" height="3" fill="#ee0050"/>
<rect x="550" y="189" width="2" height="7" fill="#ffb400"/>
<rect x="550" y="157" width="2" height="32" fill="#ffff90"/>
<rect x="550" y="138" width="2" height="19" fill="#90ee90"/>
<rect x="553" y="198" width="2" height="2" fill="#ee0050"/>
<rect x="553" y="194" width="2" height="4" fill="#ffb400"/>
<rect x="553" y="182" width="2" height="12" fill="#ffff90"/>
<rect x="553" y="179" width="2" height="3" fill="#90ee90"/>
<rect x="556" y="199" width="2" height="1" fill="#ee0050"/>
<rect x="556" y="198" width="2" height="1" fill="#ffb400"/>
<rect x="556" y="194" width="2" height="4" fill="#ffff90"/>
<rect x="556" y="193" width="2" height="1" fill="#90ee90"/>
<rect x="560" y="193" width="2" height="7" fill="#000000"/>
<rect x="560" y="188" width="2" height="5" fill="#9b30ff"/>
<rect x="560" y="175" width="2" height="13" fill="#ee0050"/>
<rect x="560" y="159" width="2" height="16" fill="#ffb400"/>
<rect x="560" y="118" width="2" height="41" fill="#ffff90"/>
<rect x="560" y="102" width="2" height="16" fill="#90ee90"/>
<rect x="563" y="193" width="2" height="7" fill="#000000"/>
<rect x="563" y="188" width="2" height="5" fill="#9b30ff"/>
<rect x="563" y="175" width="2" height="13" fill="#ee0050"/>
<rect x="563" y="159" width="2" height="16" fill="#ffb400"/>
<rect x="563" y="121" width="2" height="38" fill="#ffff90"/>
<rect x="563" y="109" width="2" height="12" fill="#90ee90"/>
<rect x="566" y="193" width="2" height="7" fill="#000000"/>
<rect x="566" y="188" width="2" height="5" fill="#9b30ff"/>
<rect x="566" y="178" width="2" height="10" fill="#ee0050"/>
<rect x="566" y="168" width="2" height="10" fill="#ffb400"/>
<rect x="566" y="159" width="2" height="9" fill="#ffff90"/>
<rect x="569" y="197" width="2" height="3" fill="#000000"/>
<rect x="569" y="195" width="2" height="2" fill="#9b30ff"/>
<rect x="569" y="191" width="2" height="4" fill="#ee0050"/>
<rect x="569" y="189" width="2" height="2" fill="#ffb400"/>
<rect x="569" y="187" width="2" height="2" fill="#ffff90"/>
<rect x="573" y="181" width="2" height="19" fill="#000000"/>
<rect x="573" y="174" width="2" height="7" fill="#9b30ff"/>
<rect x="573" y="161" width="2" height="13" fill="#ee0050"/>
<rect x="573" y="144" width="2" height="17" fill="#ffb400"/>
<rect x="573" y="114" width="2" height="30" fill="#ffff90"/>
<rect x="573" y="106" width="2" height="8" fill="#90ee90"/>
<rect x="576" y="181" width="2" height="19" fill="#000000"/>
<rect x="576" y="174" width="2" height="7" fill="#9b30ff"/>
<rect x="576" y="161" width="2" height="13" fill="#ee0050"/>
<rect x="576" y="145" width="2" height="16" fill="#ffb400"/>
<rect x="576" y="121" width="2" height="24" fill="#ffff90"/>
<rect x="579" y="184" width="2" height="16" fill="#000000"/>
<rect x="579" y="179" width="2" height="5" fill="#9b30ff"/>
<rect x="579" y="171" width="2" height="8" fill="#ee0050"/>
<rect x="579" y="167" width="2" height="4" fill="#ffb400"/>
<rect x="582" y="195" width="2" height="5" fill="#000000"/>
<rect x="582" y="194" width="2" height="1" fill="#9b30ff"/>
<rect x="582" y="192" width="2" height="2" fill="#ee0050"/>
<rect x="586" y="190" width="2" height="10" fill="#000000"/>
<rect x="586" y="184" width="2" height="6" fill="#9b30ff"/>
<rect x="586" y="174" width="2" height="10" fill="#ee0050"/>
<rect x="586" y="164" width="2" height="10" fill="#ffb400"/>
<rect x="586" y="149" width="2" height="15" fill="#ffff90"/>
<rect x="586" y="146" width="2" height="3" fill="#90ee90"/>
<rect x="586" y="144" width="2" height="2" fill="#b4d2fa"/>
<rect x="586" y="142" width="2" height="2" fill="#bebebe"/>
<rect x="586" y="139" width="2" height="3" fill="#e0e0e0"/>
<rect x="589" y="190" width="2" height="10" fill="#000000"/>
<rect x="589" y="184" width="2" height="6" fill="#9b30ff"/>
<rect x="589" y="173" width="2" height="11" fill="#ee0050"/>
<rect x="589" y="161" width="2" height="12" fill="#ffb400"/>
<rect x="589" y="139" width="2" height="22" fill="#ffff90"/>
<rect x="589" y="132" width="2" height="7" fill="#90ee90"/>
<rect x="589" y="129" width="2" height="3" fill="#b4d2fa"/>
<rect x="592" y="191" width="2" height="9" fill="#000000"/>
<rect x="592" y="187" width="2" height="4" fill="#9b30ff"/>
<rect x="592" y="180" width="2" height="7" fill="#ee0050"/>
<rect x="592" y="175" width="2" height="5" fill="#ffb400"/>
<rect x="592" y="172" width="2" height="3" fill="#ffff90"/>
<rect x="595" y="197" width="2" height="3" fill="#000000"/>
<rect x="595" y="195" width="2" height="2" fill="#9b30ff"/>
<rect x="595" y="194" width="2" height="1" fill="#ee0050"/>
<rect x="595" y="192" width="2" height="2" fill="#ffb400"/>
<rect x="599" y="188" width="2" height="12" fill="#000000"/>
<rect x="599" y="184" width="2" height="4" fill="#9b30ff"/>
<rect x="599" y="176" width="2" height="8" fill="#ee0050"/>
<rect x="599" y="169" width="2" height="7" fill="#ffb400"/>
<rect x="599" y="154" width="2" height="15" fill="#ffff90"/>
<rect x="599" y="148" width="2" height="6" fill="#90ee90"/>
<rect x="599" y="142" width="2" height="6" fill="#b4d2fa"/>
<rect x="599" y="138" width="2" height="4" fill="#bebebe"/>
<rect x="602" y="185" width="2" height="15" fill="#000000"/>
<rect x="602" y="179" width="2" height="6" fill="#9b30ff"/>
<rect x="602" y="168" width="2" height="11" fill="#ee0050"/>
<rect x="602" y="156" width="2" height="12" fill="#ffb400"/>
<rect x="602" y="135" width="2" height="21" fill="#ffff90"/>
<rect x="602" y="129" width="2" height="6" fill="#90ee90"/>
<rect x="605" y="186" width="2" height="14" fill="#000000"/>
<rect x="605" y="182" width="2" height="4" fill="#9b30ff"/>
<rect x="605" y="174" width="2" height="8" fill="#ee0050"/>
<rect x="605" y="169" width="2" height="5" fill="#ffb400"/>
<rect x="605" y="167" width="2" height="2" fill="#ffff90"/>
<rect x="608" y="195" width="2" height="5" fill="#000000"/>
<rect x="608" y="194" width="2" height="1" fill="#9b30ff"/>
<rect x="608" y="192" width="2" height="2" fill="#ee0050"/>
<rect x="612" y="191" width="2" height="9" fill="#000000"/>
<rect x="612" y="187" width="2" height="4" fill="#9b30ff"/>
<rect x="612" y="178" width="2" height="9" fill="#ee0050"/>
<rect x="612" y="170" width="2" height="8" fill="#ffb400"/>
<rect x="612" y="166" width="2" height="4" fill="#b4d2fa"/>
<rect x="612" y="162" width="2" height="4" fill="#bebebe"/>
<rect x="612" y="159" width="2" height="3" fill="#e0e0e0"/>
<rect x="615" y="191" width="2" height="9" fill="#000000"/>
<rect x="615" y="187" width="2" height="4" fill="#9b30ff"/>
<rect x="615" y="178" width="2" height="9" fill="#ee0050"/>
<rect x="615" y="169" width="2" height="9" fill="#ffb400"/>
<rect x="615" y="153" width="2" height="16" fill="#ffff90"/>
<rect x="615" y="147" width="2" height="6" fill="#90ee90"/>
<rect x="615" y="142" width="2" height="5" fill="#b4d2fa"/>
<rect x="615" y="141" width="2" height="1" fill="#bebebe"/>
<rect x="618" y="191" width="2" height="9" fill="#000000"/>
<rect x="618" y="186" width="2" height="5" fill="#9b30ff"/>
<rect x="618" y="177" width="2" height="9" fill="#ee0050"/>
<rect x="618" y="167" width="2" height="10" fill="#ffb400"/>
<rect x="618" y="146" width="2" height="21" fill="#ffff90"/>
<rect x="618" y="143" width="2" height="3" fill="#90ee90"/>
<rect x="621" y="197" width="2" height="3" fill="#000000"/>
<rect x="621" y="194" width="2" height="3" fill="#ee0050"/>
<rect x="621" y="193" width="2" height="1" fill="#ffb400"/>
<rect x="625" y="195" width="2" height="5" fill="#000000"/>
<rect x="625" y="192" width="2" height="3" fill="#9b30ff"/>
<rect x="625" y="189" width="2" height="3" fill="#ee0050"/>
<rect x="625" y="181" width="2" height="8" fill="#b4d2fa"/>
<rect x="625" y="177" width="2" height="4" fill="#bebebe"/>
<rect x="625" y="175" width="2" height="2" fill="#e0e0e0"/>
<rect x="625" y="201" width="2" height="4" fill="#ffff90"/>
<rect x="628" y="195" width="2" height="5" fill="#000000"/>
<rect x="628" y="192" width="2" height="3" fill="#9b30ff"/>
<rect x="628" y="186" width="2" height="6" fill="#ee0050"/>
<rect x="628" y="179" width="2" height="7" fill="#ffb400"/>
<rect x="628" y="166" width="2" height="13" fill="#ffff90"/>
<rect x="628" y="161" width="2" height="5" fill="#90ee90"/>
<rect x="628" y="152" width="2" height="9" fill="#b4d2fa"/>
<rect x="628" y="149" width="2" height="3" fill="#bebebe"/>
<rect x="631" y="195" width="2" height="5" fill="#000000"/>
<rect x="631" y="191" width="2" height="4" fill="#9b30ff"/>
<rect x="631" y="184" width="2" height="7" fill="#ee0050"/>
<rect x="631" y="175" width="2" height="9" fill="#ffb400"/>
<rect x="631" y="157" width="2" height="18" fill="#ffff90"/>
<rect x="631" y="153" width="2" height="4" fill="#90ee90"/>
<rect x="634" y="198" width="2" height="2" fill="#000000"/>
<rect x="634" y="197" width="2" height="1" fill="#9b30ff"/>
<rect x="634" y="196" width="2" height="1" fill="#ee0050"/>
<rect x="634" y="195" width="2" height="1" fill="#ffb400"/>
<rect x="634" y="194" width="2" height="1" fill="#ffff90"/>
<rect x="641" y="196" width="2" height="4" fill="#000000"/>
<rect x="641" y="193" width="2" height="3" fill="#9b30ff"/>
<rect x="641" y="187" width="2" height="6" fill="#ee0050"/>
<rect x="641" y="179" width="2" height="8" fill="#ffb400"/>
<rect x="641" y="162" width="2" height="17" fill="#ffff90"/>
<rect x="641" y="155" width="2" height="7" fill="#90ee90"/>
<rect x="641" y="153" width="2" height="2" fill="#b4d2fa"/>
<rect x="644" y="196" width="2" height="4" fill="#000000"/>
<rect x="644" y="193" width="2" height="3" fill="#9b30ff"/>
<rect x="644" y="187" width="2" height="6" fill="#ee0050"/>
<rect x="644" y="179" width="2" height="8" fill="#ffb400"/>
<rect x="644" y="160" width="2" height="19" fill="#ffff90"/>
<rect x="644" y="157" width="2" height="3" fill="#90ee90"/>
<rect x="647" y="198" width="2" height="2" fill="#000000"/>
<rect x="647" y="196" width="2" height="2" fill="#ee0050"/>
<rect x="647" y="195" width="2" height="1" fill="#ffb400"/>
<rect x="654" y="198" width="2" height="2" fill="#ffff90"/>
<rect x="654" y="191" width="2" height="7" fill="#90ee90"/>
<rect x="654" y="171" width="2" height="20" fill="#b4d2fa"/>
<rect x="654" y="162" width="2" height="9" fill="#bebebe"/>
<rect x="654" y="159" width="2" height="3" fill="#e0e0e0"/>
<rect x="657" y="195" width="2" height="5" fill="#b4d2fa"/>
<rect x="657" y="190" width="2" height="5" fill="#bebebe"/>
<rect x="657" y="188" width="2" height="2" fill="#e0e0e0"/>
<rect x="657" y="201" width="2" height="1" fill="#000000"/>
<rect x="657" y="202" width="2" height="2" fill="#ffff90"/>
<rect x="660" y="199" width="2" height="1" fill="#b4d2fa"/>
<rect x="660" y="198" width="2" height="1" fill="#bebebe"/>
<rect x="660" y="201" width="2" height="1" fill="#000000"/>
<rect x="667" y="183" width="2" height="17" fill="#000000"/>
<rect x="667" y="179" width="2" height="4" fill="#9b30ff"/>
<rect x="667" y="172" width="2" height="7" fill="#ee0050"/>
<rect x="667" y="167" width="2" height="5" fill="#ffb400"/>
<rect x="667" y="161" width="2" height="6" fill="#ffff90"/>
<rect x="670" y="183" width="2" height="17" fill="#000000"/>
<rect x="670" y="179" width="2" height="4" fill="#9b30ff"/>
<rect x="670" y="171" width="2" height="8" fill="#ee0050"/>
<rect x="670" y="166" width="2" height="5" fill="#ffb400"/>
<rect x="670" y="164" width="2" height="2" fill="#ffff90"/>
<rect x="673" y="197" width="2" height="3" fill="#000000"/>
<rect x="673" y="196" width="2" height="1" fill="#9b30ff"/>
<rect x="680" y="189" width="2" height="11" fill="#000000"/>
<rect x="680" y="185" width="2" height="4" fill="#9b30ff"/>
<rect x="680" y="179" width="2" height="6" fill="#ee0050"/>
<rect x="680" y="173" width="2" height="6" fill="#ffb400"/>
<rect x="680" y="167" width="2" height="6" fill="#ffff90"/>
<rect x="683" y="189" width="2" height="11" fill="#000000"/>
<rect x="683" y="186" width="2" height="3" fill="#9b30ff"/>
<rect x="683" y="179" width="2" height="7" fill="#ee0050"/>
<rect x="683" y="174" width="2" height="5" fill="#ffb400"/>
<rect x="683" y="170" width="2" height="4" fill="#ffff90"/>
<rect x="686" y="197" width="2" height="3" fill="#000000"/>
<rect x="686" y="196" width="2" height="1" fill="#ee0050"/>
<rect x="693" y="195" width="2" height="5" fill="#ffff90"/>
<rect x="693" y="190" width="2" height="5" fill="#90ee90"/>
<rect x="693" y="183" width="2" height="7" fill="#b4d2fa"/>
<rect x="693" y="180" width="2" height="3" fill="#bebebe"/>
<rect x="693" y="201" width="2" height="1" fill="#000000"/>
<rect x="696" y="201" width="2" height="1" fill="#000000"/>
<rect x="696" y="202" width="2" height="1" fill="#9b30ff"/>
<rect x="696" y="203" width="2" height="2" fill="#ee0050"/>
<rect x="696" y="205" width="2" height="2" fill="#ffb400"/>
<rect x="696" y="207" width="2" height="2" fill="#ffff90"/>
<rect x="699" y="201" width="2" height="1" fill="#000000"/>
<rect x="706" y="199" width="2" height="1" fill="#ee0050"/>
<rect x="706" y="197" width="2" height="2" fill="#ffb400"/>
<rect x="706" y="191" width="2" height="6" fill="#ffff90"/>
<rect x="706" y="188" width="2" height="3" fill="#90ee90"/>
<rect x="709" y="201" width="2" height="1" fill="#000000"/>
<rect x="709" y="202" width="2" height="1" fill="#9b30ff"/>
<rect x="709" y="203" width="2" height="1" fill="#ee0050"/>
<rect x="709" y="204" width="2" height="3" fill="#ffb400"/>
<rect x="709" y="207" width="2" height="8" fill="#ffff90"/>
<rect x="709" y="215" width="2" height="3" fill="#90ee90"/>
<rect x="709" y="218" width="2" height="4" fill="#b4d2fa"/>
<rect x="709" y="222" width="2" height="2" fill="#bebebe"/>
<rect x="712" y="201" width="2" height="1" fill="#000000"/>
<rect x="712" y="202" width="2" height="1" fill="#ffff90"/>
<rect x="712" y="203" width="2" height="1" fill="#90ee90"/>
<rect x="719" y="193" width="2" height="7" fill="#b4d2fa"/>
<rect x="719" y="187" width="2" height="6" fill="#bebebe"/>
<rect x="719" y="184" width="2" height="3" fill="#e0e0e0"/>
<rect x="719" y="201" width="2" height="2" fill="#000000"/>
<rect x="719" y="203" width="2" height="2" fill="#ee0050"/>
<rect x="719" y="205" width="2" height="2" fill="#ffb400"/>
<rect x="719" y="207" width="2" height="1" fill="#ffff90"/>
<rect x="722" y="201" width="2" height="1" fill="#000000"/>
<rect x="722" y="202" width="2" height="2" fill="#ee0050"/>
<rect x="722" y="204" width="2" height="3" fill="#ffb400"/>
<rect x="722" y="207" width="2" height="9" fill="#ffff90"/>
<rect x="722" y="216" width="2" height="4" fill="#90ee90"/>
<rect x="722" y="220" width="2" height="2" fill="#b4d2fa"/>
<rect x="725" y="201" width="2" height="1" fill="#000000"/>
<rect x="725" y="202" width="2" height="1" fill="#ffff90"/>
<rect x="725" y="203" width="2" height="1" fill="#90ee90"/>
<rect x="732" y="199" width="2" height="1" fill="#ffff90"/>
<rect x="732" y="196" width="2" height="3" fill="#90ee90"/>
<rect x="732" y="189" width="2" height="7" fill="#b4d2fa"/>
<rect x="732" y="185" width="2" height="4" fill="#bebebe"/>
<rect x="732" y="182" width="2" height="3" fill="#e0e0e0"/>
<rect x="732" y="201" width="2" height="1" fill="#000000"/>
<rect x="735" y="201" width="2" height="1" fill="#000000"/>
<rect x="735" y="202" width="2" height="1" fill="#ee0050"/>
<rect x="735" y="203" width="2" height="2" fill="#ffb400"/>
<rect x="735" y="205" width="2" height="7" fill="#ffff90"/>
<rect x="735" y="212" width="2" height="4" fill="#90ee90"/>
<rect x="735" y="216" width="2" height="3" fill="#b4d2fa"/>
<rect x="738" y="201" width="2" height="1" fill="#000000"/>
<rect x="738" y="202" width="2" height="1" fill="#ffff90"/>
<rect x="738" y="203" width="2" height="1" fill="#b4d2fa"/>
<rect x="745" y="197" width="2" height="3" fill="#90ee90"/>
<rect x="745" y="189" width="2" height="8" fill="#b4d2fa"/>
<rect x="745" y="184" width="2" height="5" fill="#bebebe"/>
<rect x="745" y="182" width="2" height="2" fill="#e0e0e0"/>
<rect x="745" y="201" width="2" height="1" fill="#000000"/>
<rect x="748" y="201" width="2" height="1" fill="#000000"/>
<rect x="748" y="202" width="2" height="1" fill="#ee0050"/>
<rect x="748" y="203" width="2" height="2" fill="#ffb400"/>
<rect x="748" y="205" width="2" height="7" fill="#ffff90"/>
<rect x="748" y="212" width="2" height="4" fill="#90ee90"/>
<rect x="751" y="201" width="2" height="1" fill="#000000"/>
<rect x="751" y="202" width="2" height="1" fill="#ffff90"/>
<rect x="758" y="199" width="2" height="1" fill="#90ee90"/>
<rect x="758" y="180" width="2" height="19" fill="#b4d2fa"/>
<rect x="758" y="172" width="2" height="8" fill="#bebebe"/>
<rect x="758" y="168" width="2" height="4" fill="#e0e0e0"/>
<rect x="758" y="201" width="2" height="2" fill="#000000"/>
<rect x="758" y="203" width="2" height="1" fill="#9b30ff"/>
<rect x="758" y="204" width="2" height="2" fill="#ee0050"/>
<rect x="758" y="206" width="2" height="3" fill="#ffb400"/>
<rect x="761" y="198" width="2" height="2" fill="#ffff90"/>
<rect x="761" y="195" width="2" height="3" fill="#90ee90"/>
<rect x="761" y="191" width="2" height="4" fill="#b4d2fa"/>
<rect x="761" y="188" width="2" height="3" fill="#bebebe"/>
<rect x="764" y="199" width="2" height="1" fill="#bebebe"/>
<rect x="764" y="201" width="2" height="1" fill="#000000"/>
<rect x="771" y="198" width="2" height="2" fill="#bebebe"/>
<rect x="771" y="196" width="2" height="2" fill="#e0e0e0"/>
<rect x="771" y="201" width="2" height="13" fill="#000000"/>
<rect x="771" y="214" width="2" height="4" fill="#9b30ff"/>
<rect x="771" y="218" width="2" height="6" fill="#ee0050"/>
<rect x="771" y="224" width="2" height="3" fill="#ffb400"/>
<rect x="774" y="198" width="2" height="2" fill="#000000"/>
<rect x="774" y="197" width="2" height="1" fill="#9b30ff"/>
<rect x="774" y="195" width="2" height="2" fill="#ee0050"/>
<rect x="774" y="201" width="2" height="4" fill="#90ee90"/>
<rect x="774" y="205" width="2" height="2" fill="#b4d2fa"/>
<rect x="777" y="199" width="2" height="1" fill="#ffff90"/>
<rect x="784" y="201" width="2" height="1" fill="#000000"/>
<rect x="784" y="202" width="2" height="3" fill="#ffff90"/>
<rect x="784" y="205" width="2" height="3" fill="#90ee90"/>
<rect x="784" y="208" width="2" height="9" fill="#b4d2fa"/>
<rect x="784" y="217" width="2" height="9" fill="#bebebe"/>
<rect x="784" y="226" width="2" height="8" fill="#e0e0e0"/>
<rect x="787" y="201" width="2" height="1" fill="#90ee90"/>
<rect x="787" y="202" width="2" height="6" fill="#b4d2fa"/>
<rect x="787" y="208" width="2" height="4" fill="#bebebe"/>
<rect x="787" y="212" width="2" height="2" fill="#e0e0e0"/>
<rect x="790" y="201" width="2" height="1" fill="#000000"/>
<rect x="790" y="202" width="2" height="1" fill="#ffff90"/>
<rect x="790" y="203" width="2" height="1" fill="#90ee90"/>
<rect x="800" y="198" width="2" height="2" fill="#ee0050"/>
<rect x="800" y="194" width="2" height="4" fill="#ffb400"/>
<rect x="800" y="189" width="2" height="5" fill="#ffff90"/>
<rect x="800" y="201" width="2" height="16" fill="#b4d2fa"/>
<rect x="800" y="217" width="2" height="12" fill="#bebebe"/>
<rect x="800" y="229" width="2" height="6" fill="#e0e0e0"/>
<rect x="803" y="199" width="2" height="1" fill="#ffb400"/>
<rect x="803" y="201" width="2" height="3" fill="#b4d2fa"/>
<rect x="803" y="204" width="2" height="2" fill="#bebebe"/>
<rect x="803" y="206" width="2" height="1" fill="#e0e0e0"/>
<rect x="813" y="197" width="2" height="3" fill="#ee0050"/>
<rect x="813" y="194" width="2" height="3" fill="#ffb400"/>
<rect x="813" y="192" width="2" height="2" fill="#ffff90"/>
<rect x="813" y="201" width="2" height="2" fill="#90ee90"/>
<rect x="813" y="203" width="2" height="17" fill="#b4d2fa"/>
<rect x="813" y="220" width="2" height="2" fill="#bebebe"/>
<rect x="816" y="201" width="2" height="1" fill="#ffff90"/>
<rect x="816" y="202" width="2" height="1" fill="#90ee90"/>
<rect x="816" y="203" width="2" height="1" fill="#b4d2fa"/>
<rect x="826" y="198" width="2" height="2" fill="#ffb400"/>
<rect x="826" y="183" width="2" height="15" fill="#ffff90"/>
<rect x="826" y="177" width="2" height="6" fill="#90ee90"/>
<rect x="826" y="201" width="2" height="13" fill="#bebebe"/>
<rect x="826" y="214" width="2" height="3" fill="#e0e0e0"/>
<rect x="829" y="201" width="2" height="1" fill="#000000"/>
<rect x="829" y="202" width="2" height="1" fill="#90ee90"/>
<rect x="829" y="203" width="2" height="1" fill="#b4d2fa"/>
<rect x="839" y="199" width="2" height="1" fill="#000000"/>
<rect x="839" y="198" width="2" height="1" fill="#9b30ff"/>
<rect x="839" y="196" width="2" height="2" fill="#ee0050"/>
<rect x="839" y="193" width="2" height="3" fill="#ffb400"/>
<rect x="839" y="201" width="2" height="10" fill="#b4d2fa"/>
<rect x="839" y="211" width="2" height="4" fill="#bebebe"/>
<rect x="839" y="215" width="2" height="1" fill="#e0e0e0"/>
<rect x="842" y="201" width="2" height="1" fill="#000000"/>
<rect x="842" y="202" width="2" height="1" fill="#ffff90"/>
<rect x="842" y="203" width="2" height="1" fill="#b4d2fa"/>
<rect x="852" y="197" width="2" height="3" fill="#ee0050"/>
<rect x="852" y="191" width="2" height="6" fill="#ffb400"/>
<rect x="852" y="166" width="2" height="25" fill="#ffff90"/>
<rect x="852" y="163" width="2" height="3" fill="#90ee90"/>
<rect x="852" y="201" width="2" height="15" fill="#b4d2fa"/>
<rect x="852" y="216" width="2" height="17" fill="#bebebe"/>
<rect x="855" y="201" width="2" height="1" fill="#90ee90"/>
<rect x="855" y="202" width="2" height="2" fill="#b4d2fa"/>
<rect x="855" y="204" width="2" height="2" fill="#bebebe"/>
<rect x="865" y="199" width="2" height="1" fill="#9b30ff"/>
<rect x="865" y="201" width="2" height="2" fill="#ffb400"/>
<rect x="865" y="203" width="2" height="12" fill="#ffff90"/>
<rect x="865" y="215" width="2" height="8" fill="#90ee90"/>
<rect x="865" y="223" width="2" height="3" fill="#b4d2fa"/>
<rect x="868" y="201" width="2" height="1" fill="#90ee90"/>
<rect x="868" y="202" width="2" height="2" fill="#b4d2fa"/>
<rect x="881" y="199" width="2" height="1" fill="#ffff90"/>
<rect x="881" y="201" width="2" height="1" fill="#bebebe"/>
<rect x="894" y="201" width="2" height="1" fill="#000000"/>
<rect x="933" y="199" width="2" height="1" fill="#ffff90"/>
<rect x="946" y="199" width="2" height="1" fill="#000000"/>
<rect x="946" y="197" width="2" height="2" fill="#9b30ff"/>
<rect x="946" y="193" width="2" height="4" fill="#ee0050"/>
<rect x="946" y="186" width="2" height="7" fill="#ffb400"/>
<rect x="946" y="164" width="2" height="22" fill="#ffff90"/>
<rect x="946" y="150" width="2" height="14" fill="#90ee90"/>
<rect x="946" y="133" width="2" height="17" fill="#b4d2fa"/>
<rect x="946" y="127" width="2" height="6" fill="#bebebe"/>
<rect x="946" y="125" width="2" height="2" fill="#e0e0e0"/>
</g>
<rect x="13" y="80" width="938" height="1" fill="#8b0000" shape-rendering="crispEdges"/>
<rect x="13" y="320" width="938" height="1" fill="#8b0000" shape-rendering="crispEdges"/>
<text x="0" y="2" font-size="9" fill="#44007f" textLength="15" lengthAdjust="spacingAndGlyphs" xml:space="preserve" stroke="#44007f" stroke-width="0.3">50%</text>
<text x="0" y="42" font-size="9" fill="#44007f" textLength="15" lengthAdjust="spacingAndGlyphs" xml:space="preserve" stroke="#44007f" stroke-width="0.3">40%</text>
<text x="0" y="82" font-size="9" fill="#44007f" textLength="15" lengthAdjust="spacingAndGlyphs" xml:space="preserve" stroke="#44007f" stroke-width="0.3">30%</text>
<text x="0" y="122" font-size="9" fill="#44007f" textLength="15" lengthAdjust="spacingAndGlyphs" xml:space="preserve" stroke="#44007f" stroke-width="0.3">20%</text>
<text x="0" y="162" font-size="9" fill="#44007f" textLength="15" lengthAdjust="spacingAndGlyphs" xml:space="preserve" stroke="#44007f" stroke-width="0.3">10%</text>
<text x="0" y="202" font-size="9" fill="#44007f" textLength="10" lengthAdjust="spacingAndGlyphs" xml:space="preserve" stroke="#44007f" stroke-width="0.3">0%</text>
<text x="0" y="242" font-size="9" fill="#44007f" textLength="20" lengthAdjust="spacingAndGlyphs" xml:space="preserve" stroke="#44007f" stroke-width="0.3">-10%</text>
<text x="0" y="282" font-size="9" fill="#44007f" textLength="20" lengthAdjust="spacingAndGlyphs" xml:space="preserve" stroke="#44007f" stroke-width="0.3">-20%</text>
<text x="0" y="322" font-size="9" fill="#44007f" textLength="20" lengthAdjust="spacingAndGlyphs" xml:space="preserve" stroke="#44007f" stroke-width="0.3">-30%</text>
<text x="0" y="362" font-size="9" fill="#44007f" textLength="20" lengthAdjust="spacingAndGlyphs" xml:space="preserve" stroke="#44007f" stroke-width="0.3">-40%</text>
<text x="0" y="402" font-size="9" fill="#44007f" textLength="20" lengthAdjust="spacingAndGlyphs" xml:space="preserve" stroke="#44007f" stroke-width="0.3">-50%</text>
<rect x="0" y="399" width="950" height="1" fill="#bebebe" shape-rendering="crispEdges"/>
<rect x="0" y="400" width="951" height="1" fill="#bebebe" shape-rendering="crispEdges"/>
<rect x="0" y="0" width="951" height="1" fill="#bebebe" shape-rendering="crispEdges"/>
<text transform="translate(31,241) rotate(-90)" font-size="11.5" fill="#44007f" textLength="60" lengthAdjust="spacingAndGlyphs">Prob Delta</text>
<text x="7.5" y="421" font-size="12" fill="#44007f" textLength="12" lengthAdjust="spacingAndGlyphs" xml:space="preserve">9a</text>
<text x="46.5" y="421" font-size="12" fill="#44007f" textLength="18" lengthAdjust="spacingAndGlyphs" xml:space="preserve">12p</text>
<text x="85.5" y="421" font-size="12" fill="#44007f" textLength="12" lengthAdjust="spacingAndGlyphs" xml:space="preserve">3p</text>
<text x="124.5" y="421" font-size="12" fill="#44007f" textLength="12" lengthAdjust="spacingAndGlyphs" xml:space="preserve">6p</text>
<text x="163.5" y="421" font-size="12" fill="#44007f" textLength="12" lengthAdjust="spacingAndGlyphs" xml:space="preserve">9p</text>
<text x="202.5" y="421" font-size="12" fill="#44007f" textLength="18" lengthAdjust="spacingAndGlyphs" xml:space="preserve">12a</text>
<text x="241.5" y="421" font-size="12" fill="#44007f" textLength="12" lengthAdjust="spacingAndGlyphs" xml:space="preserve">3a</text>
<text x="280.5" y="421" font-size="12" fill="#44007f" textLength="12" lengthAdjust="spacingAndGlyphs" xml:space="preserve">6a</text>
<text x="319.5" y="421" font-size="12" fill="#44007f" textLength="12" lengthAdjust="spacingAndGlyphs" xml:space="preserve">9a</text>
<text x="358.5" y="421" font-size="12" fill="#44007f" textLength="18" lengthAdjust="spacingAndGlyphs" xml:space="preserve">12p</text>
<text x="397.5" y="421" font-size="12" fill="#44007f" textLength="12" lengthAdjust="spacingAndGlyphs" xml:space="preserve">3p</text>
<text x="436.5" y="421" font-size="12" fill="#44007f" textLength="12" lengthAdjust="spacingAndGlyphs" xml:space="preserve">6p</text>
<text x="475.5" y="421" font-size="12" fill="#44007f" textLength="12" lengthAdjust="spacingAndGlyphs" xml:space="preserve">9p</text>
<text x="514.5" y="421" font-size="12" fill="#44007f" textLength="18" lengthAdjust="spacingAndGlyphs" xml:space="preserve">12a</text>
<text x="553.5" y="421" font-size="12" fill="#44007f" textLength="12" lengthAdjust="spacingAndGlyphs" xml:space="preserve">3a</text>
<text x="592.5" y="421" font-size="12" fill="#44007f" textLength="12" lengthAdjust="spacingAndGlyphs" xml:space="preserve">6a</text>
<text x="631.5" y="421" font-size="12" fill="#44007f" textLength="12" lengthAdjust="spacingAndGlyphs" xml:space="preserve">9a</text>
<text x="670.5" y="421" font-size="12" fill="#44007f" textLength="18" lengthAdjust="spacingAndGlyphs" xml:space="preserve">12p</text>
<text x="709.5" y="421" font-size="12" fill="#44007f" textLength="12" lengthAdjust="spacingAndGlyphs" xml:space="preserve">3p</text>
<text x="748.5" y="421" font-size="12" fill="#44007f" textLength="12" lengthAdjust="spacingAndGlyphs" xml:space="preserve">6p</text>
<text x="787.5" y="421" font-size="12" fill="#44007f" textLength="12" lengthAdjust="spacingAndGlyphs" xml:space="preserve">9p</text>
<text x="826.5" y="421" font-size="12" fill="#44007f" textLength="18" lengthAdjust="spacingAndGlyphs" xml:space="preserve">12a</text>
<text x="865.5" y="421" font-size="12" fill="#44007f" textLength="12" lengthAdjust="spacingAndGlyphs" xml:space="preserve">3a</text>
<text x="904.5" y="421" font-size="12" fill="#44007f" textLength="12" lengthAdjust="spacingAndGlyphs" xml:space="preserve">6a</text>
<text x="54.5" y="431" font-size="12" fill="#44007f" textLength="36" lengthAdjust="spacingAndGlyphs" xml:space="preserve">Jan  8</text>
<text x="304" y="431" font-size="12" fill="#44007f" textLength="36" lengthAdjust="spacingAndGlyphs" xml:space="preserve">Jan  9</text>
<text x="610" y="431" font-size="12" fill="#44007f" textLength="36" lengthAdjust="spacingAndGlyphs" xml:space="preserve">Jan 10</text>
<text x="943" y="431" font-size="12" fill="#44007f" textLength="36" lengthAdjust="spacingAndGlyphs" xml:space="preserve">Jan 11</text>
<text x="306.5" y="446" font-size="12" fill="#44007f" font-weight="bold" textLength="238" lengthAdjust="spacingAndGlyphs" xml:space="preserve">Cloud Ceiling Trend -  1 Hr Period</text>
<rect x="2.5" y="452.5" width="946" height="186" fill="#fff" stroke="#000" stroke-width="5" shape-rendering="crispEdges"/>
<g shape-rendering="crispEdges">
<rect x="10" y="460" width="91" height="11" fill="#e0e0e0"/>
<rect x="10" y="480" width="91" height="11" fill="#bebebe"/>
<rect x="10" y="500" width="91" height="11" fill="#b4d2fa"/>
<rect x="10" y="520" width="91" height="11" fill="#90ee90"/>
<rect x="10" y="540" width="91" height="11" fill="#ffff90"/>
<rect x="10" y="560" width="91" height="11" fill="#ffb400"/>
<rect x="10" y="580" width="91" height="11" fill="#ee0050"/>
<rect x="10" y="600" width="91" height="11" fill="#9b30ff"/>
<rect x="10" y="620" width="91" height="11" fill="#000000"/>
</g>
<text x="109.5" y="471" font-size="12" fill="#44007f" textLength="300" lengthAdjust="spacingAndGlyphs" xml:space="preserve">Probability Trend -  1 Hr 25000 foot Cloud Ceiling</text>
<text x="109.5" y="491" font-size="12" fill="#44007f" textLength="300" lengthAdjust="spacingAndGlyphs" xml:space="preserve">Probability Trend -  1 Hr 15000 foot Cloud Ceiling</text>
<text x="109.5" y="511" font-size="12" fill="#44007f" textLength="300" lengthAdjust="spacingAndGlyphs" xml:space="preserve">Probability Trend -  1 Hr 10000 foot Cloud Ceiling</text>
<text x="109.5" y="531" font-size="12" fill="#44007f" textLength="294" lengthAdjust="spacingAndGlyphs" xml:space="preserve">Probability Trend -  1 Hr 5000 foot Cloud Ceiling</text>
<text x="109.5" y="551" font-size="12" fill="#44007f" textLength="294" lengthAdjust="spacingAndGlyphs" xml:space="preserve">Probability Trend -  1 Hr 3000 foot Cloud Ceiling</text>
<text x="109.5" y="571" font-size="12" fill="#44007f" textLength="294" lengthAdjust="spacingAndGlyphs" xml:space="preserve">Probability Trend -  1 Hr 1000 foot Cloud Ceiling</text>
<text x="109.5" y="591" font-size="12" fill="#44007f" textLength="288" lengthAdjust="spacingAndGlyphs" xml:space="preserve">Probability Trend -  1 Hr 500 foot Cloud Ceiling</text>
<text x="109.5" y="611" font-size="12" fill="#44007f" textLength="288" lengthAdjust="spacingAndGlyphs" xml:space="preserve">Probability Trend -  1 Hr 200 foot Cloud Ceiling</text>
<text x="109.5" y="631" font-size="12" fill="#44007f" textLength="288" lengthAdjust="spacingAndGlyphs" xml:space="preserve">Probability Trend -  1 Hr 100 foot Cloud Ceiling</text>
<text x="550" y="503" font-size="15" fill="#8b0000" textLength="64" lengthAdjust="spacingAndGlyphs" xml:space="preserve">Rockford</text>
<g shape-rendering="crispEdges">
<rect x="651" y="572" width="2" height="9" fill="#000000"/>
<rect x="651" y="564" width="2" height="8" fill="#9b30ff"/>
<rect x="651" y="544" width="2" height="20" fill="#ee0050"/>
<rect x="651" y="530" width="2" height="14" fill="#ffb400"/>
<rect x="654" y="572" width="2" height="9" fill="#000000"/>
<rect x="654" y="564" width="2" height="8" fill="#9b30ff"/>
<rect x="654" y="543" width="2" height="21" fill="#ee0050"/>
<rect x="654" y="523" width="2" height="20" fill="#ffb400"/>
<rect x="654" y="506" width="2" height="17" fill="#ffff90"/>
<rect x="657" y="572" width="2" height="9" fill="#000000"/>
<rect x="657" y="564" width="2" height="8" fill="#9b30ff"/>
<rect x="657" y="544" width="2" height="20" fill="#ee0050"/>
<rect x="657" y="536" width="2" height="8" fill="#ffb400"/>
<rect x="660" y="572" width="2" height="9" fill="#000000"/>
<rect x="660" y="564" width="2" height="8" fill="#9b30ff"/>
<rect x="660" y="544" width="2" height="20" fill="#ee0050"/>
<rect x="660" y="536" width="2" height="8" fill="#ffb400"/>
</g>
<text x="530" y="616" font-size="12" fill="#44007f" textLength="96" lengthAdjust="spacingAndGlyphs" xml:space="preserve">Trend: Current -</text>
<text x="659" y="608" font-size="8.5" fill="#44007f" textLength="5" lengthAdjust="spacingAndGlyphs" xml:space="preserve">3</text>
<text x="656" y="615" font-size="8.5" fill="#44007f" textLength="5" lengthAdjust="spacingAndGlyphs" xml:space="preserve">6</text>
<text x="650" y="622" font-size="8.5" fill="#44007f" textLength="10" lengthAdjust="spacingAndGlyphs" xml:space="preserve">12</text>
<text x="644" y="629" font-size="8.5" fill="#44007f" textLength="10" lengthAdjust="spacingAndGlyphs" xml:space="preserve">24</text>
<text x="99" y="652" font-size="8.5" fill="#3a8ad8" textLength="140" lengthAdjust="spacingAndGlyphs" xml:space="preserve">Produced by NOAA/NWS Detroit</text>
<text x="99" y="662" font-size="8.5" fill="#a0a0a0" textLength="120" lengthAdjust="spacingAndGlyphs" xml:space="preserve">created 2018-01-08 08:29</text>
<text x="399" y="657" font-size="8.5" fill="#3a8ad8" textLength="295" lengthAdjust="spacingAndGlyphs" xml:space="preserve">Parametric Weighted Time Lag Ensemble Population Percentage</text>
</svg>
</body></html>
